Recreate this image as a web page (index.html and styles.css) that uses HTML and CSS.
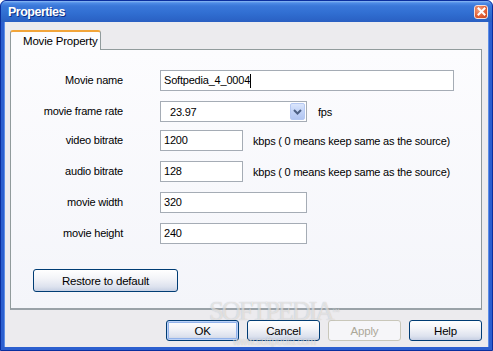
FILE: index.html
```html
<!DOCTYPE html>
<html>
<head>
<meta charset="utf-8">
<link rel="stylesheet" href="styles.css">
</head>
<body>
<div class="window">
  <div class="titlebar">
    <span class="title">Properties</span>
    <span class="close"><svg width="9" height="9" viewBox="0 0 9 9"><path d="M1.5 1.5 L7.5 7.5 M7.5 1.5 L1.5 7.5" stroke="#fff" stroke-width="2" stroke-linecap="square"/></svg></span>
  </div>
  <div class="client">
    <div class="tabs">
      <div class="tab">Movie Property</div>
    </div>
    <div class="panel">
      <div class="form">
        <label class="lbl">Movie name</label>
        <div class="field"><div class="edit wide">Softpedia_4_0004<span class="caret"></span></div></div>

        <label class="lbl rate">movie frame rate</label>
        <div class="field rate">
          <div class="combo"><span class="combo-text">23.97</span><span class="drop"><svg width="9" height="6" viewBox="0 0 9 6"><path d="M1 1 L4.5 4.5 L8 1" fill="none" stroke="#4d6185" stroke-width="2"/></svg></span></div>
          <span class="unit">fps</span>
        </div>

        <label class="lbl">video bitrate</label>
        <div class="field"><div class="edit short">1200</div><span class="unit">kbps ( 0 means keep same as the source)</span></div>

        <label class="lbl">audio bitrate</label>
        <div class="field"><div class="edit short">128</div><span class="unit">kbps ( 0 means keep same as the source)</span></div>

        <label class="lbl">movie width</label>
        <div class="field"><div class="edit mid">320</div></div>

        <label class="lbl">movie height</label>
        <div class="field"><div class="edit mid">240</div></div>
      </div>
      <button class="btn restore">Restore to default</button>
    </div>
    <div class="buttons">
      <button class="btn dlg focus">OK</button>
      <button class="btn dlg">Cancel</button>
      <button class="btn dlg disabled">Apply</button>
      <button class="btn dlg">Help</button>
    </div>
    <div class="watermark">SOFTPEDIA<sup>™</sup></div>
    <div class="watermark2">www.softpedia.com</div>
  </div>
</div>
</body>
</html>
```

FILE: styles.css
```css
html, body {
  margin: 0;
  padding: 0;
  background: #ffffff;
}
body {
  font-family: "Liberation Sans", Arial, sans-serif;
  font-size: 11px;
  letter-spacing: -0.2px;
  color: #000;
}
.window {
  width: 493px;
  height: 351px;
  box-sizing: border-box;
  display: flex;
  flex-direction: column;
  background: #2c5fcf;
  border: 1px solid #0a2e9e;
  border-radius: 6px 6px 0 0;
  padding: 0 3px 3px 3px;
  position: relative;
  overflow: hidden;
}
.titlebar {
  height: 21px;
  margin: 0 -3px;
  padding: 0 4px 0 7px;
  display: flex;
  align-items: center;
  justify-content: space-between;
  background: linear-gradient(to bottom, #8cbaf5 0px, #4d8be6 2px, #3a77d9 5px, #3270d3 11px, #2d68cb 16px, #2a5fc2 21px);
  border-radius: 5px 5px 0 0;
}
.title {
  color: #fff;
  font-weight: bold;
  font-size: 12.5px;
  letter-spacing: -0.5px;
  padding-top: 1px;
  text-shadow: 1px 1px 0 #0c2f86;
}
.close {
  width: 12px;
  height: 12px;
  border: 1px solid #f4e1dc;
  border-radius: 3px;
  background: radial-gradient(circle at 35% 30%, #f2a27f, #e15d33 60%, #c3431d);
  display: flex;
  align-items: center;
  justify-content: center;
}
.client {
  flex: 1;
  background: #ecebee;
  padding: 8px 6px 0 5px;
  border-left: 1px solid #5d8ee6;
  border-right: 1px solid #5d8ee6;
  display: flex;
  flex-direction: column;
  position: relative;
}
.tabs {
  display: flex;
  height: 19px;
  position: relative;
  z-index: 2;
}
.tab {
  width: 91px;
  height: 20px;
  box-sizing: border-box;
  border: 1px solid #919b9c;
  border-bottom: none;
  border-top: 2px solid #f2a53a;
  border-radius: 3px 3px 0 0;
  background: #fcfcfe;
  padding: 3px 0 0 12px;
  font-size: 11.5px;
  line-height: 13px;
  white-space: nowrap;
}
.panel {
  height: 261px;
  box-sizing: border-box;
  border: 1px solid #919b9c;
  border-right-color: #8e989c;
  border-bottom: 2px solid #9aa2a8;
  background: linear-gradient(to bottom, #fcfcfe, #f4f5fa);
  padding: 20px 0 0 0;
  display: flex;
  flex-direction: column;
  align-items: flex-start;
}
.form {
  display: grid;
  grid-template-columns: 112px 1fr;
  column-gap: 37px;
  row-gap: 10px;
  width: 100%;
}
.lbl {
  text-align: right;
  font-size: 11px;
  line-height: 21px;
  height: 21px;
}
.field {
  display: flex;
  align-items: center;
  height: 21px;
}
.rate {
  margin-bottom: -2px;
}
.edit {
  height: 21px;
  box-sizing: border-box;
  border: 1px solid #a5acb5;
  background: #fff;
  padding: 0 3px;
  font-size: 11px;
  line-height: 19px;
  display: flex;
  align-items: center;
}
.wide { width: 294px; }
.short { width: 83px; }
.mid { width: 147px; }
.caret {
  display: inline-block;
  width: 1px;
  height: 14px;
  background: #000;
}
.combo {
  width: 147px;
  height: 21px;
  box-sizing: border-box;
  border: 1px solid #a5acb5;
  background: #fff;
  display: flex;
  align-items: center;
  justify-content: space-between;
  padding: 0 1px 0 9px;
  font-size: 11px;
}
.drop {
  width: 15px;
  height: 17px;
  box-sizing: border-box;
  border: 1px solid #b6c9f2;
  border-radius: 2px;
  background: linear-gradient(to bottom, #dbe6fc, #c2d3f7 50%, #b2c6f2);
  display: flex;
  align-items: center;
  justify-content: center;
}
.unit {
  margin-left: 10px;
  font-size: 11px;
  white-space: nowrap;
}
.rate .unit {
  margin-left: 11px;
}
.btn {
  font-family: "Liberation Sans", Arial, sans-serif;
  font-size: 11.5px;
  letter-spacing: -0.2px;
  color: #000;
  border: 1px solid #003c74;
  border-radius: 3px;
  background: linear-gradient(to bottom, #ffffff 0%, #f3f4f8 40%, #dde2ee 80%, #c6cfe3 100%);
  padding: 0;
  margin: 0;
  box-sizing: border-box;
}
.restore {
  width: 145px;
  height: 23px;
  margin: 25px 0 0 22px;
}
.buttons {
  display: flex;
  justify-content: flex-end;
  gap: 8px;
  padding-top: 10px;
}
.dlg {
  width: 73px;
  height: 21px;
}
.focus {
  box-shadow: inset 0 0 0 1px #bcd2f7, inset 0 0 0 2px #93b3ea;
}
.disabled {
  border-color: #c9c7ba;
  color: #aca899;
  background: #f6f6f9;
}
.watermark {
  position: absolute;
  left: 204px;
  top: 283px;
  height: 13px;
  line-height: 13px;
  overflow: visible;
  font-family: "Liberation Serif", serif;
  font-size: 27px;
  letter-spacing: -2.5px;
  color: rgba(255, 255, 255, 0.55);
  text-shadow: 0 0 1px rgba(120, 120, 120, 0.45);
  pointer-events: none;
}
.watermark sup {
  font-size: 8px;
  letter-spacing: 0;
  vertical-align: top;
}
.watermark2 {
  position: absolute;
  left: 228px;
  top: 315px;
  line-height: 10px;
  font-family: "Liberation Sans", sans-serif;
  font-size: 10px;
  color: rgba(255, 255, 255, 0.6);
  text-shadow: 0 0 1px rgba(120, 120, 120, 0.5);
  pointer-events: none;
}
```
